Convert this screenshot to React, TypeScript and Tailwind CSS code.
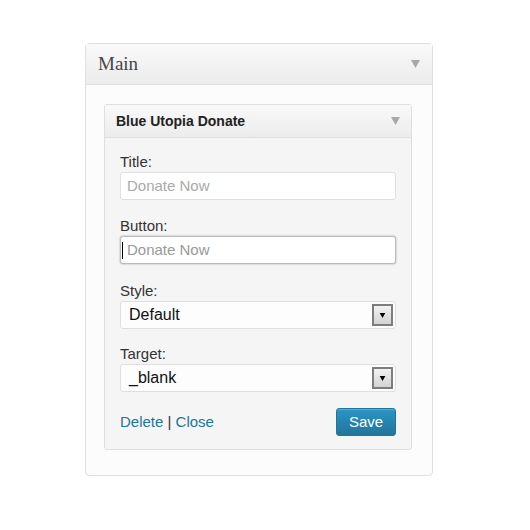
import { ReactNode } from 'react'

function Caret({ className }: { className: string }) {
  return (
    <svg width="9" height="8" viewBox="0 0 9 8" className={className}>
      <path d="M0 0h9L4.5 8z" fill="currentColor" />
    </svg>
  )
}

function Field({ label, className, children }: { label: string; className: string; children: ReactNode }) {
  return (
    <div className={className}>
      <label className="block text-[15px] leading-[20px] text-[#333]">{label}</label>
      {children}
    </div>
  )
}

function SelectBox({ value }: { value: string }) {
  return (
    <div className="flex h-[28px] items-center justify-between rounded-[3px] border border-[#dfdfdf] bg-[#fdfdfd] pl-[8px] pr-[2px]">
      <span className="text-[16px] text-[#111]">{value}</span>
      <span className="flex h-[22px] w-[21px] shrink-0 items-center justify-center border-2 border-[#7d7d7d] bg-gradient-to-b from-[#f2f2f2] to-[#d4d4d4]">
        <Caret className="h-[5px] w-[9px] text-black" />
      </span>
    </div>
  )
}

export default function App() {
  return (
    <div className="min-h-[530px] bg-white pl-[85px] pt-[43px] font-['Liberation_Sans',Arial,sans-serif]">
      <div className="w-[348px] rounded-[4px] border border-[#dfdfdf] bg-[#fcfcfc]">
        <div className="flex h-[41px] items-center justify-between border-b border-[#dfdfdf] bg-gradient-to-b from-[#f9f9f9] to-[#ececec] pl-[12px] pr-[12px]">
          <span className="font-['Liberation_Serif',Georgia,serif] text-[19px] text-[#464646]">Main</span>
          <Caret className="h-[8px] w-[9px] text-[#a8a8a8]" />
        </div>
        <div className="pb-[25px] pl-[18px] pt-[19px]">
          <div className="w-[308px] rounded-[3px] border border-[#dfdfdf] bg-[#f5f5f5]">
            <div className="flex h-[33px] items-center justify-between border-b border-[#dfdfdf] bg-gradient-to-b from-[#f9f9f9] to-[#ececec] pl-[11px] pr-[11px]">
              <span className="text-[14px] font-bold text-[#222]">Blue Utopia Donate</span>
              <Caret className="h-[8px] w-[9px] text-[#a8a8a8]" />
            </div>
            <div className="px-[15px] pb-[13px] pt-[14px]">
              <Field label="Title:" className="">
                <div className="flex h-[28px] items-center rounded-[3px] border border-[#dfdfdf] bg-white px-[6px] text-[15px] text-[#aaa]">
                  Donate Now
                </div>
              </Field>
              <Field label="Button:" className="mt-[16px]">
                <div className="flex h-[28px] items-center rounded-[3px] border border-[#bbb] bg-white pl-[1px] text-[15px] text-[#999] shadow-[0_0_2px_rgba(0,0,0,0.35)]">
                  <span className="mr-[4px] h-[17px] w-px bg-black" />
                  Donate Now
                </div>
              </Field>
              <Field label="Style:" className="mt-[17px]">
                <SelectBox value="Default" />
              </Field>
              <Field label="Target:" className="mt-[15px]">
                <SelectBox value="_blank" />
              </Field>
              <div className="mt-[16px] flex items-center justify-between">
                <span className="text-[15px] text-[#21759b]">
                  Delete <span className="text-[#333]">|</span> Close
                </span>
                <button className="h-[28px] w-[60px] rounded-[3px] border border-[#21759b] bg-gradient-to-b from-[#2a95c5] to-[#21759b] text-[15px] text-white shadow-[inset_0_1px_0_rgba(120,200,230,0.5)]">
                  Save
                </button>
              </div>
            </div>
          </div>
        </div>
      </div>
    </div>
  )
}
